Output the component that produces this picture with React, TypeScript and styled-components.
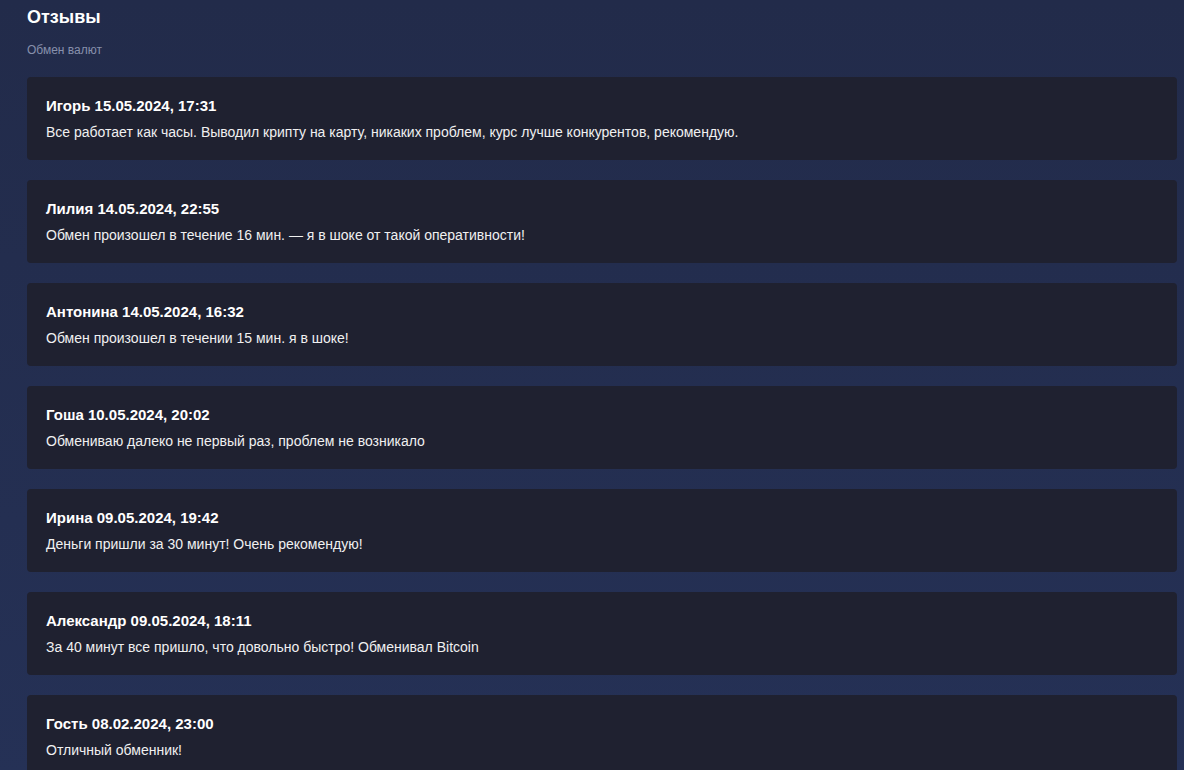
import styled, { createGlobalStyle } from 'styled-components'

const GlobalStyle = createGlobalStyle`
  html, body {
    margin: 0;
    padding: 0;
  }
  body {
    min-height: 100vh;
    background: linear-gradient(180deg, #222b4a 0%, #253156 100%);
    font-family: "Liberation Sans", Arial, sans-serif;
    color: #f2f2f2;
    overflow: hidden;
  }
`

const Page = styled.main`
  padding: 7px 7px 0 27px;
`

const Title = styled.h1`
  margin: 0;
  font-size: 18px;
  line-height: 20px;
  font-weight: 700;
  color: #ffffff;
`

const Subtitle = styled.div`
  margin-top: 16px;
  font-size: 12px;
  line-height: 14px;
  color: #8790ab;
`

const List = styled.div`
  margin-top: 20px;
  display: flex;
  flex-direction: column;
  gap: 20px;
`

const Card = styled.article`
  background: #1f2130;
  border-radius: 4px;
  padding: 20px 19px;
`

const Author = styled.h3`
  margin: 0;
  font-size: 15px;
  line-height: 17px;
  font-weight: 700;
  color: #ffffff;
`

const Text = styled.p`
  margin: 10px 0 0;
  font-size: 14px;
  line-height: 16px;
  color: #f0f0f0;
`

const reviews = [
  { name: 'Игорь', date: '15.05.2024, 17:31', text: 'Все работает как часы. Выводил крипту на карту, никаких проблем, курс лучше конкурентов, рекомендую.' },
  { name: 'Лилия', date: '14.05.2024, 22:55', text: 'Обмен произошел в течение 16 мин. — я в шоке от такой оперативности!' },
  { name: 'Антонина', date: '14.05.2024, 16:32', text: 'Обмен произошел в течении 15 мин. я в шоке!' },
  { name: 'Гоша', date: '10.05.2024, 20:02', text: 'Обмениваю далеко не первый раз, проблем не возникало' },
  { name: 'Ирина', date: '09.05.2024, 19:42', text: 'Деньги пришли за 30 минут! Очень рекомендую!' },
  { name: 'Александр', date: '09.05.2024, 18:11', text: 'За 40 минут все пришло, что довольно быстро! Обменивал Bitcoin' },
  { name: 'Гость', date: '08.02.2024, 23:00', text: 'Отличный обменник!' },
]

const App = () => {
  return (
    <Page>
      <GlobalStyle />
      <Title>Отзывы</Title>
      <Subtitle>Обмен валют</Subtitle>
      <List>
        {reviews.map((r, key) => (
          <Card key={key}>
            <Author>{r.name} {r.date}</Author>
            <Text>{r.text}</Text>
          </Card>
        ))}
      </List>
    </Page>
  )
}

export default App
